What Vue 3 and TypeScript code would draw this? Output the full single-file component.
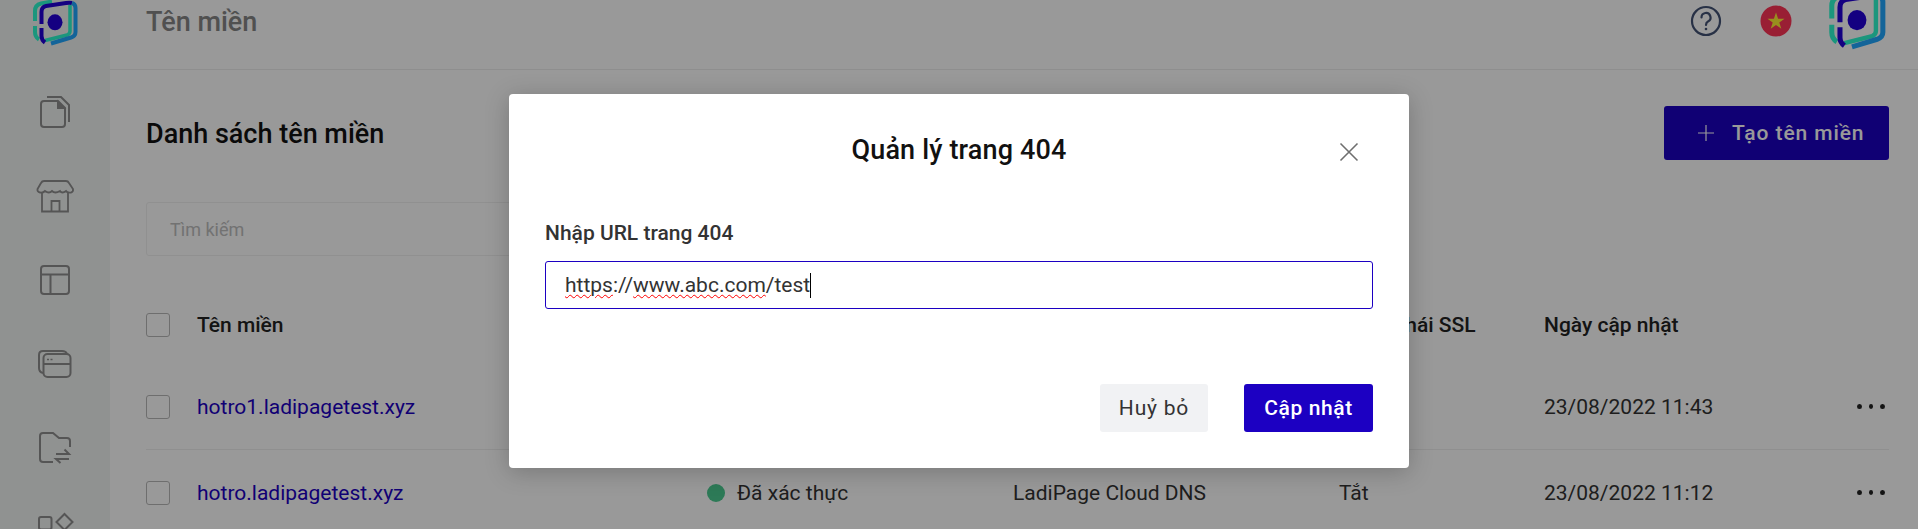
<template>
  <div class="page">
    <aside class="sidebar">
      <div class="side-logo">
        <svg width="46" height="46" viewBox="0 0 46 46" fill="none">
          <path d="M3 21V11Q3 5 9 3.500L20 1.500" stroke="#2dfad0" stroke-width="4" />
          <path d="M3 26V32Q3 37 7 39.500" stroke="#2dfad0" stroke-width="4" />
          <path d="M38 5V31Q38 34 35 35L13 40.500" stroke="#2dfad0" stroke-width="3.500" />
          <path d="M9.500 24V12Q9.500 7 14 6L34 3Q37.500 2.500 40 3" stroke="#2200d8" stroke-width="4" />
          <path d="M9.500 28V36Q9.500 40 13 42.500" stroke="#2200d8" stroke-width="4" />
          <path d="M40 3Q43.500 4 43.500 8V32Q43.500 36 39 37.500L19 43.500" stroke="#21a7ff" stroke-width="4" />
          <ellipse cx="23" cy="22.300" rx="7.500" ry="8" fill="#2200d8" />
        </svg>
      </div>
      <div class="side-item">
        <svg width="40" height="40" viewBox="0 0 40 40" fill="none" stroke="#8e8e8e" stroke-width="2">
          <path d="M9 9H23L30 16V32a3 3 0 0 1-3 3H9a3 3 0 0 1-3-3V12a3 3 0 0 1 3-3Z" />
          <path d="M12 5H26L34 13V30" />
          <path d="M23 10L29 16H23Z" fill="#8e8e8e" />
        </svg>
      </div>
      <div class="side-item">
        <svg width="40" height="40" viewBox="0 0 40 40" fill="none" stroke="#8e8e8e" stroke-width="1.800">
          <path d="M9 5H31Q33 5 34 7L38 13Q38.500 16 36 16.500Q32 17 31 15Q27 18 25 15Q20 18 17 15Q14 18 10 15Q8 17 5 16.500Q2 16 2.500 13L6 7Q7 5 9 5Z" />
          <path d="M7 17V35.500H33V17" />
          <path d="M16.500 35V25H24.500V35" />
        </svg>
      </div>
      <div class="side-item">
        <svg width="40" height="40" viewBox="0 0 40 40" fill="none" stroke="#8e8e8e" stroke-width="2">
          <rect x="6" y="6" width="28" height="28" rx="3" />
          <path d="M6 14.500H34M15.500 14.500V34" />
        </svg>
      </div>
      <div class="side-item">
        <svg width="40" height="40" viewBox="0 0 40 40" fill="none" stroke="#8e8e8e" stroke-width="2">
          <path d="M8 29Q4 28 4 24V11Q4 7 8 7H27Q31 7 32 10" />
          <rect x="8.500" y="10" width="27" height="23" rx="4" />
          <path d="M8.500 20H35.500" />
          <path d="M12 15.500H19" stroke-dasharray="2 1.500" stroke-width="1.600" />
        </svg>
      </div>
      <div class="side-item">
        <svg width="40" height="40" viewBox="0 0 40 40" fill="none" stroke="#8e8e8e" stroke-width="2">
          <path d="M18 34H8Q5 34 5 31V8Q5 5 8 5H18L24 10H32Q35 10 35 13V19" />
          <path d="M21 26H34L29.500 21.500M34 31H21L25.500 35" />
        </svg>
      </div>
      <div class="side-item">
        <svg width="40" height="40" viewBox="0 0 40 40" fill="none" stroke="#8e8e8e" stroke-width="2">
          <rect x="4" y="5" width="12.500" height="12.500" rx="2" />
          <path d="M29.500 2L37.500 10L29.500 18L21.500 10Z" />
        </svg>
      </div>
    </aside>

    <main class="main">
      <header class="topbar">
        <span class="topbar-title">Tên miền</span>
        <div class="topbar-right">
          <svg class="help" width="32" height="32" viewBox="0 0 32 32" fill="none" stroke="#435375" stroke-width="2.200">
            <circle cx="16" cy="16" r="14" />
            <path d="M11.500 12.500A4.500 4.500 0 1 1 18 16.500Q16 17.500 16 20" stroke-linecap="round" />
            <circle cx="16" cy="24" r="1.300" fill="#435375" stroke="none" />
          </svg>
          <svg class="flag" width="32" height="32" viewBox="0 0 32 32">
            <circle cx="16" cy="16" r="15.500" fill="#ff3557" />
            <path d="M16 7.500L18.100 13.700H24.500L19.300 17.500L21.300 23.700L16 19.900L10.700 23.700L12.700 17.500L7.500 13.700H13.900Z" fill="#ffef33" />
          </svg>
          <svg class="avatar" width="58" height="58" viewBox="0 0 46 46" fill="none">
            <path d="M3 21V11Q3 5 9 3.500L20 1.500" stroke="#2dfad0" stroke-width="4" />
            <path d="M3 26V32Q3 37 7 39.500" stroke="#2dfad0" stroke-width="4" />
            <path d="M38 5V31Q38 34 35 35L13 40.500" stroke="#2dfad0" stroke-width="3.500" />
            <path d="M9.500 24V12Q9.500 7 14 6L34 3Q37.500 2.500 40 3" stroke="#2200d8" stroke-width="4" />
            <path d="M9.500 28V36Q9.500 40 13 42.500" stroke="#2200d8" stroke-width="4" />
            <path d="M40 3Q43.500 4 43.500 8V32Q43.500 36 39 37.500L19 43.500" stroke="#21a7ff" stroke-width="4" />
            <ellipse cx="23" cy="22.300" rx="7.500" ry="8" fill="#2200d8" />
          </svg>
        </div>
      </header>

      <section class="content">
        <div class="title-row">
          <h1>Danh sách tên miền</h1>
          <button class="create">
            <svg width="18" height="18" viewBox="0 0 18 18" stroke="#fff" stroke-width="1.200"><path d="M9 1V17M1 9H17" /></svg>
            Tạo tên miền
          </button>
        </div>
        <div class="search">Tìm kiếm</div>

        <div class="table-row table-head">
          <span class="check"></span>
          <span>Tên miền</span>
          <span></span>
          <span></span>
          <span>Trạng thái SSL</span>
          <span>Ngày cập nhật</span>
          <span></span>
        </div>
        <div v-for="row in rows" :key="row.domain" class="table-row">
          <span class="check"></span>
          <a class="domain">{{ row.domain }}</a>
          <span class="status"><i v-if="row.status" class="dot"></i>{{ row.status }}</span>
          <span>{{ row.dns }}</span>
          <span>{{ row.ssl }}</span>
          <span>{{ row.updated }}</span>
          <span class="more"><i></i><i></i><i></i></span>
        </div>
      </section>
    </main>

    <div class="overlay">
      <div class="modal">
        <div class="modal-head">
          <span></span>
          <h2>Quản lý trang 404</h2>
          <svg class="close" width="20" height="20" viewBox="0 0 20 20" stroke="#6f6f6f" stroke-width="1.600"><path d="M1.500 1.500L18.500 18.500M18.500 1.500L1.500 18.500" /></svg>
        </div>
        <label class="field-label">Nhập URL trang 404</label>
        <div class="field"><span class="typo">https</span>://<span class="typo">www.abc.com</span>/test<i class="caret"></i></div>
        <div class="modal-actions">
          <button class="btn-cancel">Huỷ bỏ</button>
          <button class="btn-save">Cập nhật</button>
        </div>
      </div>
    </div>
  </div>
</template>

<script setup lang="ts">
interface DomainRow {
  domain: string
  status: string
  dns: string
  ssl: string
  updated: string
}

const rows: DomainRow[] = [
  { domain: 'hotro1.ladipagetest.xyz', status: '', dns: '', ssl: '', updated: '23/08/2022 11:43' },
  { domain: 'hotro.ladipagetest.xyz', status: 'Đã xác thực', dns: 'LadiPage Cloud DNS', ssl: 'Tắt', updated: '23/08/2022 11:12' },
]
</script>

<style>
html, body {
  margin: 0;
  overflow: hidden;
  background: #fff;
}
</style>

<style scoped>
.page {
  position: relative;
  display: flex;
  height: 529px;
  overflow: hidden;
  font-family: Roboto, "Liberation Sans", sans-serif;
  color: #333;
}

.sidebar {
  flex: 0 0 110px;
  background: #f1f3f2;
  display: flex;
  flex-direction: column;
  align-items: center;
}

.side-logo {
  height: 70px;
  flex: none;
}

.side-item {
  height: 84px;
  flex: none;
  display: flex;
  align-items: center;
  justify-content: center;
}

.main {
  flex: 1;
  min-width: 0;
}

.topbar {
  height: 42px;
  padding: 0 32px 27px 36px;
  border-bottom: 1px solid #ededed;
  display: flex;
  align-items: center;
  justify-content: space-between;
}

.topbar-title {
  padding-top: 2px;
  font-size: 27px;
  font-weight: 500;
  color: #858585;
}

.topbar-right {
  display: flex;
  align-items: center;
  gap: 38px;
  height: 42px;
}

.avatar {
  flex: none;
  margin-left: -2px;
}

.content {
  padding: 36px 29px 0 36px;
}

.title-row {
  display: flex;
  align-items: center;
  justify-content: space-between;
}

.title-row h1 {
  margin: 0;
  padding-top: 2px;
  font-size: 27px;
  font-weight: 500;
  color: #111;
}

.create {
  width: 225px;
  height: 54px;
  border: 0;
  border-radius: 3px;
  padding: 0 0 0 33px;
  background: #1c00c2;
  color: #fff;
  font: 500 21px Roboto, sans-serif;
  letter-spacing: 0.9px;
  display: flex;
  align-items: center;
  gap: 17px;
}

.search {
  margin-top: 42px;
  width: 760px;
  height: 54px;
  box-sizing: border-box;
  border: 1px solid #f0f0f0;
  border-radius: 3px;
  padding-left: 23px;
  display: flex;
  align-items: center;
  font-size: 18px;
  color: #bebebe;
}

.table-row {
  display: grid;
  grid-template-columns: 51px 510px 306px 326px 205px 1fr 32px;
  align-items: center;
  height: 85px;
  border-bottom: 1px solid #eee;
  font-size: 21px;
  color: #333;
}

.table-row:last-child {
  border-bottom: 0;
}

.table-head {
  margin-top: 30px;
  height: 78px;
  border-bottom: 0;
  font-weight: 500;
  color: #222;
}

.check {
  width: 24px;
  height: 24px;
  box-sizing: border-box;
  border: 1px solid #b8b8b8;
  border-radius: 3px;
}

.domain {
  color: #1c00c2;
}

.status {
  display: flex;
  align-items: center;
  gap: 12px;
}

.dot {
  width: 18px;
  height: 18px;
  border-radius: 50%;
  background: #4bcb91;
}

.more {
  display: flex;
  gap: 7px;
  justify-content: flex-end;
  padding-right: 4px;
}

.more i {
  width: 5px;
  height: 5px;
  border-radius: 50%;
  background: #222;
}

.overlay {
  position: absolute;
  inset: 0;
  background: rgba(0, 0, 0, 0.4);
  display: flex;
  justify-content: center;
  align-items: flex-start;
}

.modal {
  margin-top: 94px;
  width: 900px;
  box-sizing: border-box;
  padding: 42px 36px 36px;
  background: #fff;
  border-radius: 4px;
  box-shadow: 0 4px 24px rgba(0, 0, 0, 0.22);
}

.modal-head {
  display: grid;
  grid-template-columns: 1fr auto 1fr;
  align-items: start;
}

.modal-head h2 {
  margin: 0;
  font-size: 27px;
  line-height: 28px;
  font-weight: 500;
  letter-spacing: 0.15px;
  color: #111;
}

.close {
  justify-self: end;
  margin: 6px 14px 0 0;
}

.field-label {
  display: block;
  margin-top: 57px;
  font-size: 21px;
  line-height: 24px;
  font-weight: 500;
  color: #333;
}

.field {
  margin-top: 16px;
  height: 48px;
  box-sizing: border-box;
  border: 1px solid #1c00c2;
  border-radius: 3px;
  padding-left: 19px;
  display: flex;
  align-items: center;
  font-size: 21px;
  color: #333;
}

.typo {
  text-decoration: underline wavy #f00 1px;
  text-underline-offset: 2px;
}

.caret {
  width: 1px;
  height: 25px;
  background: #000;
}

.modal-actions {
  margin-top: 75px;
  display: flex;
  justify-content: flex-end;
  gap: 36px;
}

.modal-actions button {
  height: 48px;
  border: 0;
  border-radius: 3px;
  font-family: Roboto, sans-serif;
  font-size: 21px;
  padding: 0;
}

.btn-cancel {
  width: 108px;
  background: #f1f2f4;
  color: #333;
  letter-spacing: 0.8px;
}

.btn-save {
  width: 129px;
  background: #1c00c2;
  color: #fff;
  font-weight: 500;
  letter-spacing: 0.6px;
}
</style>
